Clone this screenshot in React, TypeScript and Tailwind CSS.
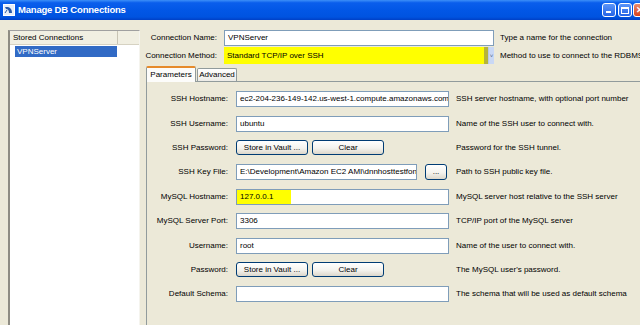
import React from "react";

function Input({ value, w = "w-[213px]", highlight }: { value?: string; w?: string; highlight?: boolean }) {
  return (
    <div className={`${w} h-[16px] shrink-0 bg-white border border-[#7F9DB9] flex items-center overflow-hidden whitespace-nowrap`}>
      {highlight ? (
        <div className="h-full w-[54px] bg-[#FFFF00] pl-[3px] flex items-center">{value}</div>
      ) : (
        <span className="pl-[3px]">{value}</span>
      )}
    </div>
  );
}

function Btn({ label, w = "w-[72px]", h = "h-[15px]" }: { label: string; w?: string; h?: string }) {
  return (
    <div
      className={`${w} ${h} shrink-0 rounded-[3px] border border-[#003C74] bg-[linear-gradient(180deg,#FFFFFF_0%,#F4F3EE_55%,#DCD7CB_100%)] flex items-center justify-center whitespace-nowrap`}
    >
      {label}
    </div>
  );
}

function Row({ label, children, help }: { label: string; children: React.ReactNode; help: string }) {
  return (
    <div className="h-[24.4px] flex items-center">
      <div className="w-[81px] text-right shrink-0 whitespace-nowrap">{label}</div>
      <div className="w-[213px] ml-[8px] flex items-center shrink-0">{children}</div>
      <div className="ml-[7px] whitespace-nowrap">{help}</div>
    </div>
  );
}

export default function App() {
  return (
    <div className="w-[640px] h-[325px] overflow-hidden bg-[#ECE9D8] flex flex-col font-['Liberation_Sans',Arial,sans-serif] text-[8px] text-black leading-none">
      {/* Title bar */}
      <div className="h-[20px] shrink-0 flex items-center bg-[linear-gradient(180deg,#3D8FF8_0%,#0A5EEC_14%,#0257E6_50%,#0053E0_85%,#0040C6_100%)]">
        <svg className="ml-[3px] shrink-0" width="12" height="12" viewBox="0 0 12 12">
          <rect x="0.5" y="0.5" width="11" height="11" fill="#E8EEF8" stroke="#FFFFFF" />
          <path d="M2 3 L5 3 Q9 4 9 9 L6 9 Q6 5 3 5 Z" fill="#2A5AA8" />
          <path d="M2 9 L4 6" stroke="#2A5AA8" strokeWidth="1" />
        </svg>
        <div className="ml-[3px] text-white font-bold text-[9.5px] tracking-[-0.2px] whitespace-nowrap">Manage DB Connections</div>
        <div className="flex-1" />
        <div className="w-[14px] h-[14px] shrink-0 rounded-[3px] border border-white bg-[linear-gradient(180deg,#5B95F8,#2563E6)] flex items-end justify-start pl-[3px] pb-[3px]">
          <div className="w-[5px] h-[2px] bg-white" />
        </div>
        <div className="ml-[2px] w-[14px] h-[14px] shrink-0 rounded-[3px] border border-white bg-[linear-gradient(180deg,#5B95F8,#2563E6)] flex items-center justify-center">
          <div className="w-[8px] h-[7px] border border-white border-t-2" />
        </div>
        <div className="ml-[1px] mr-[-7px] w-[14px] h-[14px] shrink-0 rounded-[3px] border border-white bg-[linear-gradient(180deg,#E98A6C,#D8421C)] flex items-center justify-center text-white font-bold text-[9px]">
          ✕
        </div>
      </div>

      {/* Body */}
      <div className="flex flex-1 min-h-0">
        {/* Left list */}
        <div className="ml-[8px] mt-[10px] w-[132px] shrink-0 bg-white border-l-2 border-t border-l-[#8E8C83] border-t-[#A0A0A0] border-r border-r-[#F5F4EE] flex flex-col">
          <div className="h-[14px] flex bg-[#F1EFE2] border-b border-[#D6D2C2]">
            <div className="w-[108px] border-r border-[#C8C4B4] pl-[3px] flex items-center whitespace-nowrap">Stored Connections</div>
            <div className="flex-1" />
          </div>
          <div className="mt-[1px] ml-[5px] w-[102px] h-[11px] bg-[#316AC5] text-white pl-[2px] flex items-center">VPNServer</div>
        </div>

        {/* Right area */}
        <div className="ml-[6px] flex-1 flex flex-col min-w-0">
          <div className="mt-[9px] h-[17px] flex items-center">
            <div className="w-[71px] text-right shrink-0 whitespace-nowrap">Connection Name:</div>
            <div className="ml-[7px] w-[270px] h-[16px] shrink-0 bg-white border border-[#7F9DB9] pl-[3px] flex items-center">VPNServer</div>
            <div className="ml-[6px] whitespace-nowrap">Type a name for the connection</div>
          </div>
          <div className="mt-[1px] h-[17px] flex items-center">
            <div className="w-[71px] text-right shrink-0 whitespace-nowrap flex justify-end">Connection Method:</div>
            <div className="ml-[7px] w-[270px] h-[17px] shrink-0 bg-[#FFFF00] flex items-stretch">
              <div className="flex-1 pl-[3px] flex items-center whitespace-nowrap">Standard TCP/IP over SSH</div>
              <div className="w-[4px] bg-[#B5B43A]" />
              <div className="w-[6px] bg-[#C9D8F5] border-l border-[#B7C9EA] flex items-center justify-center text-[#4D6185] text-[6px]">˅</div>
            </div>
            <div className="ml-[6px] whitespace-nowrap">Method to use to connect to the RDBMS</div>
          </div>

          {/* Tabs */}
          <div className="mt-[2px] h-[15px] flex items-end shrink-0 relative z-10">
            <div className="w-[50px] h-[16px] mb-[-1px] border border-b-0 border-[#919B9C] border-t-[#E68B2C] border-t-2 bg-[#FCFCFA] rounded-t-[2px] flex items-center justify-center">
              Parameters
            </div>
            <div className="ml-[1px] w-[40px] h-[13px] border border-[#919B9C] border-b-0 bg-[linear-gradient(180deg,#FFFFFF,#ECEBE6)] rounded-t-[2px] flex items-center justify-center">
              Advanced
            </div>
          </div>

          {/* Panel */}
          <div className="flex-1 border-t border-l border-[#919B9C] bg-[#ECE9D8] pt-[5px] flex flex-col">
            <Row label="SSH Hostname:" help="SSH server hostname, with optional port number">
              <Input value="ec2-204-236-149-142.us-west-1.compute.amazonaws.com" />
            </Row>
            <Row label="SSH Username:" help="Name of the SSH user to connect with.">
              <Input value="ubuntu" />
            </Row>
            <Row label="SSH Password:" help="Password for the SSH tunnel.">
              <Btn label="Store in Vault ..." />
              <div className="ml-[4px]">
                <Btn label="Clear" />
              </div>
            </Row>
            <Row label="SSH Key File:" help="Path to SSH public key file.">
              <Input w="w-[181px]" value="E:\Development\Amazon EC2 AMI\dnnhosttestfon" />
              <div className="ml-[8px]">
                <Btn label="..." w="w-[22px]" h="h-[16px]" />
              </div>
            </Row>
            <Row label="MySQL Hostname:" help="MySQL server host relative to the SSH server">
              <Input value="127.0.0.1" highlight />
            </Row>
            <Row label="MySQL Server Port:" help="TCP/IP port of the MySQL server">
              <Input value="3306" />
            </Row>
            <Row label="Username:" help="Name of the user to connect with.">
              <Input value="root" />
            </Row>
            <Row label="Password:" help="The MySQL user's password.">
              <Btn label="Store in Vault ..." />
              <div className="ml-[4px]">
                <Btn label="Clear" />
              </div>
            </Row>
            <Row label="Default Schema:" help="The schema that will be used as default schema">
              <Input value="" />
            </Row>
          </div>
        </div>
      </div>
    </div>
  );
}
